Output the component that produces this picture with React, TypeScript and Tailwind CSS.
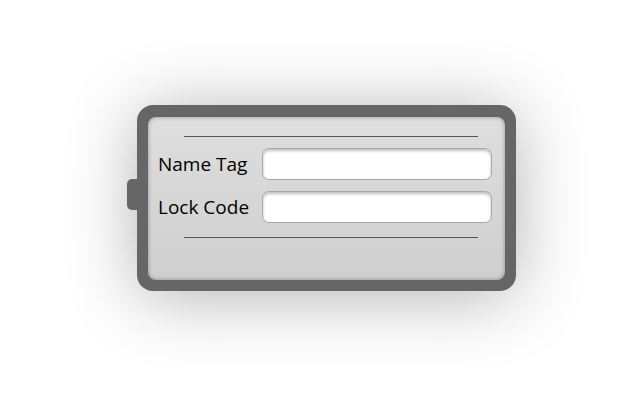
import React from 'react';

/**
 * LockPanel - a framed form with a name tag and a lock code field.
 */
const Field: React.FC<{ label: string }> = ({ label }) => {
  return (
    <div className="flex items-center justify-between">
      <span className="text-[19px] leading-none text-black">{label}</span>
      <input
        type="text"
        className="w-[230px] h-[32px] rounded-[7px] bg-white border border-[#a8a8a8] shadow-[inset_0_2px_3px_rgba(0,0,0,0.25)] outline-none"
      />
    </div>
  );
};

export default function App() {
  return (
    <div
      className="w-[644px] h-[401px] bg-white pt-[105px] pl-[137px] overflow-hidden"
      style={{ fontFamily: '"Open Sans", "Noto Sans", sans-serif' }}
    >
      <div className="relative w-[379px] h-[186px] rounded-[16px] bg-[#666666] px-[11px] pt-[12px] pb-[11px] shadow-[0_6px_70px_rgba(0,0,0,0.3)]">
        {/* small tab on the left edge */}
        <div className="absolute left-[-10px] top-[74px] w-[12px] h-[31px] rounded-l-[5px] bg-[#666666]" />
        <div className="h-full rounded-[8px] bg-gradient-to-b from-[#dedede] to-[#cfcfcf] shadow-[inset_0_0_4px_rgba(0,0,0,0.35)] pl-[10px] pr-[13px] pt-[19px]">
          <div className="ml-[26px] mr-[14px] h-px bg-[#555555]" />
          <div className="mt-[11px] flex flex-col gap-[11px]">
            <Field label="Name Tag" />
            <Field label="Lock Code" />
          </div>
          <div className="mt-[14px] ml-[26px] mr-[14px] h-px bg-[#555555]" />
        </div>
      </div>
    </div>
  );
}
